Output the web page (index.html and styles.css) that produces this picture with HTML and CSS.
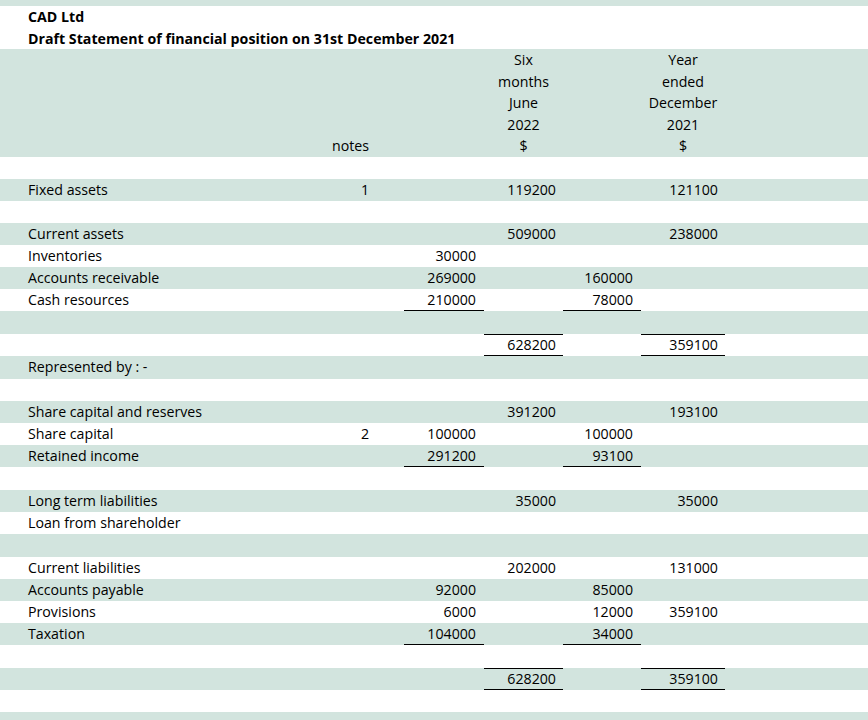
FILE: index.html
```html
<!DOCTYPE html>
<html lang="en">
<head>
<meta charset="utf-8">
<title>CAD Ltd - Draft Statement of financial position</title>
<link rel="stylesheet" href="styles.css">
</head>
<body>
<table class="sheet">
  <colgroup>
    <col class="c-label">
    <col class="c-notes">
    <col class="c-c">
    <col class="c-d">
    <col class="c-e">
    <col class="c-f">
    <col class="c-g">
  </colgroup>
  <tbody>
    <tr class="band edge"><td colspan="7"></td></tr>
    <tr class="plain title-row">
      <td colspan="7" class="title">CAD Ltd<br>Draft Statement of financial position on 31st December 2021</td>
    </tr>
    <tr class="band head-row">
      <td></td>
      <td class="num">notes</td>
      <td></td>
      <td class="ctr">Six<br>months<br>June<br>2022<br>$</td>
      <td></td>
      <td class="ctr">Year<br>ended<br>December<br>2021<br>$</td>
      <td></td>
    </tr>
    <tr class="plain"><td colspan="7"></td></tr>
    <tr class="band">
      <td class="label">Fixed assets</td><td class="num">1</td><td></td><td class="num">119200</td><td></td><td class="num">121100</td><td></td>
    </tr>
    <tr class="plain"><td colspan="7"></td></tr>
    <tr class="band">
      <td class="label">Current assets</td><td></td><td></td><td class="num">509000</td><td></td><td class="num">238000</td><td></td>
    </tr>
    <tr class="plain">
      <td class="label">Inventories</td><td></td><td class="num">30000</td><td></td><td></td><td></td><td></td>
    </tr>
    <tr class="band">
      <td class="label">Accounts receivable</td><td></td><td class="num">269000</td><td></td><td class="num">160000</td><td></td><td></td>
    </tr>
    <tr class="plain">
      <td class="label">Cash resources</td><td></td><td class="num ul">210000</td><td></td><td class="num ul">78000</td><td></td><td></td>
    </tr>
    <tr class="band tall"><td colspan="7"></td></tr>
    <tr class="plain">
      <td></td><td></td><td></td><td class="num ol ul">628200</td><td></td><td class="num ol ul">359100</td><td></td>
    </tr>
    <tr class="band tall">
      <td class="label" colspan="3">Represented by : -</td><td></td><td></td><td></td><td></td>
    </tr>
    <tr class="plain"><td colspan="7"></td></tr>
    <tr class="band">
      <td class="label">Share capital and reserves</td><td></td><td></td><td class="num">391200</td><td></td><td class="num">193100</td><td></td>
    </tr>
    <tr class="plain">
      <td class="label">Share capital</td><td class="num">2</td><td class="num">100000</td><td></td><td class="num">100000</td><td></td><td></td>
    </tr>
    <tr class="band">
      <td class="label">Retained income</td><td></td><td class="num ul">291200</td><td></td><td class="num ul">93100</td><td></td><td></td>
    </tr>
    <tr class="plain tall"><td colspan="7"></td></tr>
    <tr class="band">
      <td class="label">Long term liabilities</td><td></td><td></td><td class="num">35000</td><td></td><td class="num">35000</td><td></td>
    </tr>
    <tr class="plain">
      <td class="label">Loan from shareholder</td><td></td><td></td><td></td><td></td><td></td><td></td>
    </tr>
    <tr class="band tall"><td colspan="7"></td></tr>
    <tr class="plain">
      <td class="label">Current liabilities</td><td></td><td></td><td class="num">202000</td><td></td><td class="num">131000</td><td></td>
    </tr>
    <tr class="band">
      <td class="label">Accounts payable</td><td></td><td class="num">92000</td><td></td><td class="num">85000</td><td></td><td></td>
    </tr>
    <tr class="plain">
      <td class="label">Provisions</td><td></td><td class="num">6000</td><td></td><td class="num">12000</td><td class="num">359100</td><td></td>
    </tr>
    <tr class="band">
      <td class="label">Taxation</td><td></td><td class="num ul">104000</td><td></td><td class="num ul">34000</td><td></td><td></td>
    </tr>
    <tr class="plain tall"><td colspan="7"></td></tr>
    <tr class="band">
      <td></td><td></td><td></td><td class="num ol ul">628200</td><td></td><td class="num ol ul">359100</td><td></td>
    </tr>
    <tr class="plain"><td colspan="7"></td></tr>
    <tr class="band edge-bottom"><td colspan="7"></td></tr>
  </tbody>
</table>
</body>
</html>
```

FILE: styles.css
```css
html, body {
  margin: 0;
  padding: 0;
  background: #ffffff;
}

body {
  font-family: "Open Sans", "Noto Sans", "Liberation Sans", sans-serif;
  font-size: 14.2px;
  color: #000000;
  overflow: hidden;
}

.sheet {
  width: 868px;
  border-collapse: separate;
  border-spacing: 0;
  table-layout: fixed;
}

.c-label { width: 330px; }
.c-notes { width: 74px; }
.c-c { width: 80px; }
.c-d { width: 79px; }
.c-e { width: 78px; }
.c-f { width: 84px; }
.c-g { width: 143px; }

.sheet td {
  padding: 0;
  height: 22px;
  line-height: 22px;
  white-space: nowrap;
  vertical-align: middle;
}

.band { background: #d2e4de; }
.plain { background: #ffffff; }

.sheet .edge td { height: 6px; line-height: 6px; }
.sheet .edge-bottom td { height: 9px; line-height: 9px; }
.sheet .tall td { height: 23px; }

.sheet .title-row td { height: 43px; line-height: 21.5px; }
.sheet .title {
  padding-left: 28px;
  font-weight: 700;
}

.sheet .head-row td { height: 107px; line-height: 21.5px; vertical-align: bottom; }

.sheet .label { padding-left: 28px; }

.sheet .num {
  text-align: right;
  padding-right: 8px;
}

.sheet td:nth-child(2).num { padding-right: 35px; }
.sheet td:nth-child(4).num,
.sheet td:nth-child(6).num { padding-right: 7px; }

.sheet .ctr { text-align: center; }

.sheet .ul {
  background: linear-gradient(#000, #000) left bottom / 100% 1px no-repeat;
}
.sheet .ol.ul {
  background:
    linear-gradient(#000, #000) left top / 100% 1px no-repeat,
    linear-gradient(#000, #000) left bottom / 100% 1px no-repeat;
}
```
